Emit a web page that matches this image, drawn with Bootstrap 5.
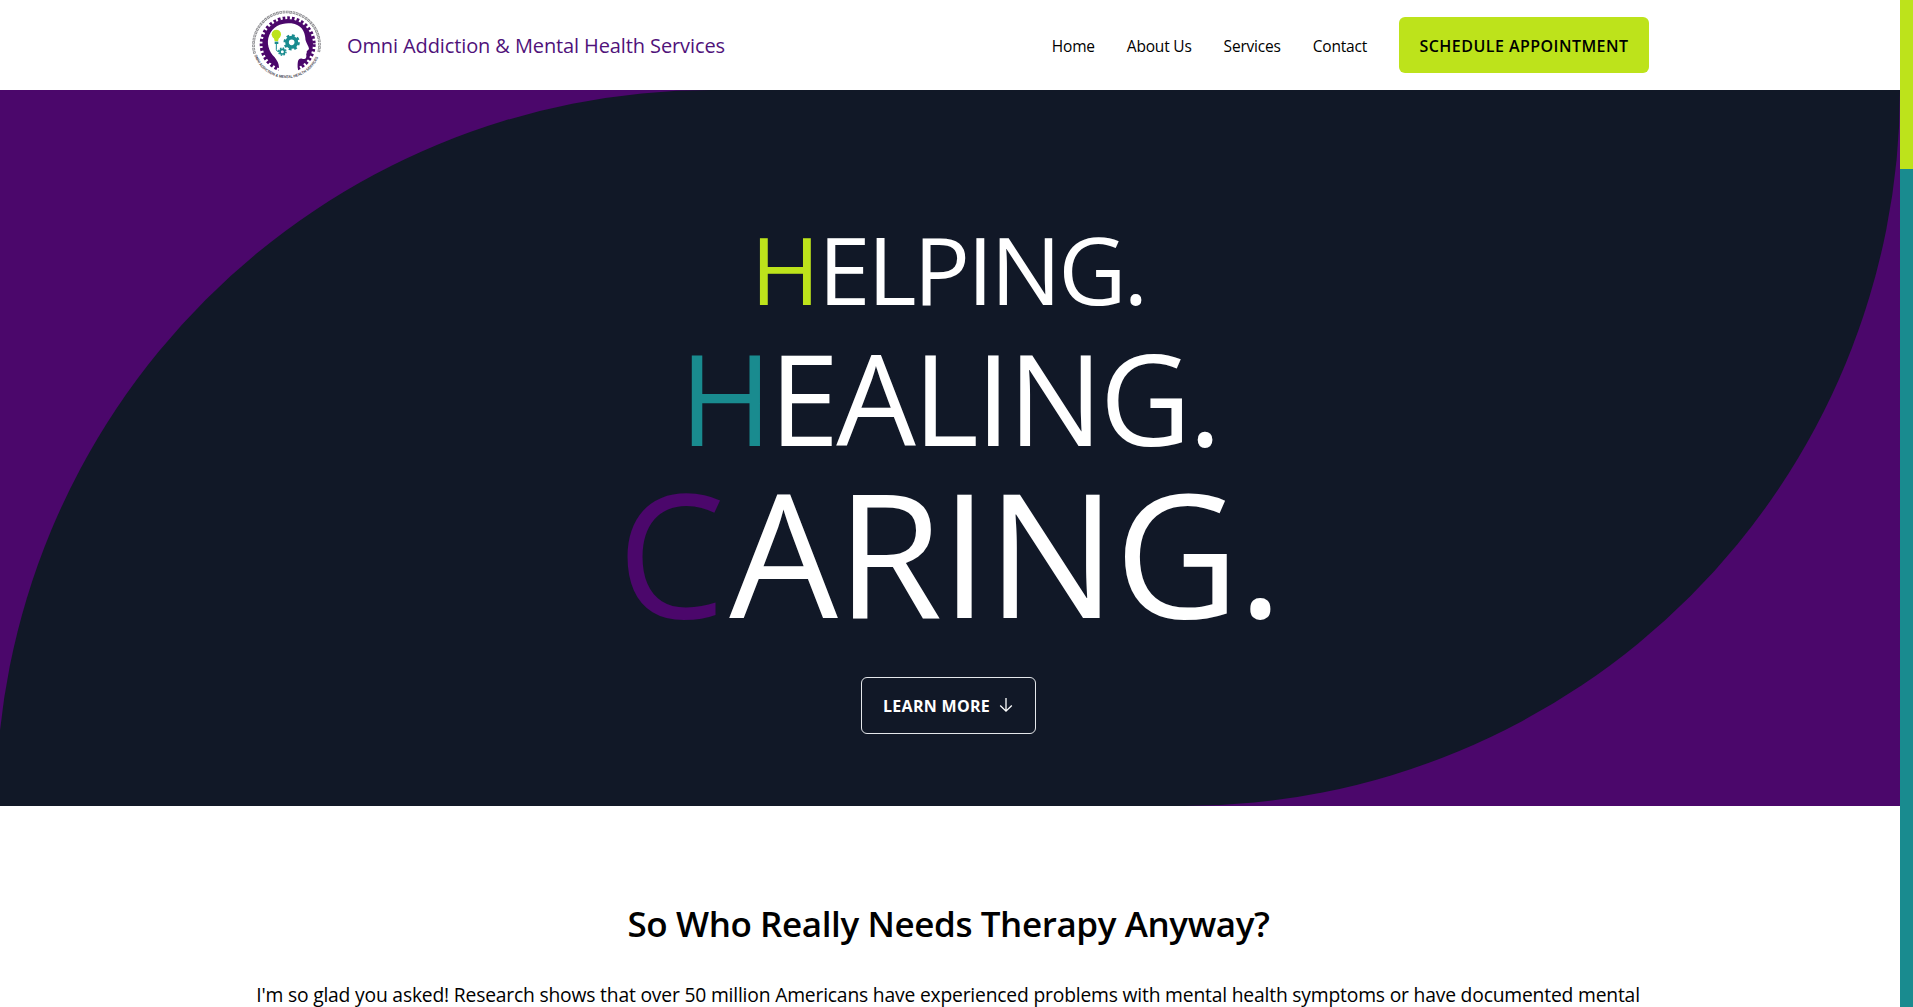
<!DOCTYPE html>
<html lang="en">
<head>
<meta charset="utf-8">
<meta name="viewport" content="width=device-width, initial-scale=1">
<title>Omni Addiction &amp; Mental Health Services</title>
<link href="https://cdn.jsdelivr.net/npm/bootstrap@5.3.0/dist/css/bootstrap.min.css" rel="stylesheet">
<style>
:root{--lime:#bde31b;--teal:#198b8f;--plum:#4b076b;--ink:#111827}
body{font-family:"Open Sans","Noto Sans",sans-serif;color:#000;height:100vh;overflow:hidden}
.page{width:1900px;height:100vh;overflow:hidden}
.wrap{width:1400px;margin:0 auto}
.site-nav{height:90px;padding:0;background:#fff}
.logo{width:70px;height:72px;margin:-2px 0 0 2px}
.brand-name{font-size:20px;font-weight:500;letter-spacing:-.11px;color:#50127a;margin-left:25px;padding-top:2px;line-height:30px}
.site-nav .links .nav-link{font-size:15.5px;letter-spacing:-.2px;color:#000;padding:1px 0 0;line-height:24px}
.links{gap:32px;margin-right:1px}
.btn-book{width:250px;height:56px;background:var(--lime);border:0;border-radius:6px;font-size:16px;font-weight:600;letter-spacing:.46px;padding:1px 0 0;color:#000}
.hero{height:716px;background:var(--plum);overflow:hidden}
.leaf{height:716px;background:var(--ink);border-radius:716px 0 716px 0;margin-left:-4px;padding:130.5px 0 0 4px}
.word{color:#fff;font-weight:400;margin:0;white-space:nowrap}
.w1{font-size:94px;line-height:96px;letter-spacing:-3px;padding-right:4px}
.w1 span{letter-spacing:-1.8px}
.w2{font-size:126px;line-height:128px;letter-spacing:-3px;margin-top:16.5px;padding-right:2px}
.w3{font-size:172px;line-height:176px;letter-spacing:-1.8px;margin-top:2.2px;padding-right:2px}
.w3 span{letter-spacing:4px}
.c-lime{color:var(--lime)}.c-teal{color:var(--teal)}.c-plum{color:var(--plum)}
.btn-more{width:175px;height:57px;border:1px solid #e5e7eb;border-radius:6px;color:#fff;font-size:16px;font-weight:700;letter-spacing:.3px;margin:38px 3px 0 0;padding:1px 1px 0 0;gap:9px}
.about{padding-top:98px}
.about h2{font-size:35px;line-height:40px;font-weight:600;letter-spacing:-.4px;margin:0 0 35px;padding-right:3px}
.about p{font-size:19.3px;line-height:32px;letter-spacing:-.19px;margin:0 -10px;padding-right:4px;white-space:nowrap}
.scroll-rail{width:13px;height:100vh;background:var(--teal)}
.scroll-thumb{height:169px;background:var(--lime)}
</style>
<script src="https://cdn.jsdelivr.net/npm/bootstrap@5.3.0/dist/js/bootstrap.bundle.min.js"></script>
</head>
<body class="d-flex">
<div class="page flex-shrink-0">
  <nav class="site-nav navbar navbar-expand">
    <div class="wrap d-flex align-items-center">
      <svg class="logo flex-shrink-0" viewBox="36 24 210 216" role="img" aria-label="Omni logo">
        <defs><path id="seal" d="M43 166A103 103 0 0 0 237 166"/></defs>
        <path d="M44 161A99 99 0 1 1 236 157" fill="none" stroke="#8b8b8f" stroke-width="8" stroke-dasharray="8 2"/>
        <path d="M44 161A99 99 0 1 1 236 157" fill="none" stroke="#fff" stroke-width="3" stroke-dasharray="4 6" stroke-dashoffset="-2"/>
        <circle cx="143" cy="133" r="76" fill="#4b076b"/>
        <circle cx="143" cy="133" r="79" fill="none" stroke="#4b076b" stroke-width="10" stroke-dasharray="8 6.18"/>
        <path d="M116 222C119 196 116 188 104 172C86 154 78 128 88 105C99 77 128 67 154 70C184 74 194 94 196 114C195 124 207 140 207 146C207 150 200 151 200 155C202 159 197 161 199 165C200 178 194 178 186 176C174 174 170 184 175 222Z" fill="#fff"/>
        <circle cx="109" cy="103" r="14" fill="#bde31b"/><path d="M101 112h16l-3 12h-10z" fill="#bde31b"/>
        <path d="M104 125h11v7h-11z" fill="#198b8f"/>
        <path d="M109 132v17q0 6 9 6" fill="none" stroke="#198b8f" stroke-width="3"/>
        <circle cx="155" cy="127" r="14" fill="none" stroke="#198b8f" stroke-width="11"/>
        <circle cx="155" cy="127" r="21" fill="none" stroke="#198b8f" stroke-width="7" stroke-dasharray="8.5 8"/>
        <circle cx="127" cy="155" r="7" fill="none" stroke="#198b8f" stroke-width="5"/>
        <circle cx="127" cy="155" r="11" fill="none" stroke="#198b8f" stroke-width="4" stroke-dasharray="4.6 4.04"/>
        <text font-family="Liberation Sans, sans-serif" font-size="11.5" font-weight="700" fill="#45424d"><textPath href="#seal" textLength="246" lengthAdjust="spacingAndGlyphs">OMNI ADDICTION &amp; MENTAL HEALTH SERVICES</textPath></text>
      </svg>
      <span class="brand-name">Omni Addiction &amp; Mental Health Services</span>
      <div class="links navbar-nav ms-auto align-items-center">
        <a class="nav-link" href="#">Home</a>
        <a class="nav-link" href="#">About Us</a>
        <a class="nav-link" href="#">Services</a>
        <a class="nav-link" href="#">Contact</a>
        <a class="btn btn-book d-flex align-items-center justify-content-center" href="#">SCHEDULE APPOINTMENT</a>
      </div>
    </div>
  </nav>
  <header class="hero">
    <div class="leaf d-flex flex-column align-items-center">
      <h1 class="word w1"><span class="c-lime">H</span>ELPING.</h1>
      <h1 class="word w2"><span class="c-teal">H</span>EALING.</h1>
      <h1 class="word w3"><span class="c-plum">C</span>ARING.</h1>
      <a class="btn btn-more d-flex align-items-center justify-content-center" href="#">LEARN MORE
        <svg width="14" height="16" viewBox="0 0 14 16" fill="none" stroke="#fff" stroke-width="1.3"><path d="M7 0v13M1.2 7.5L7 13.2l5.8-5.7"/></svg>
      </a>
    </div>
  </header>
  <section class="about">
    <div class="wrap text-center">
      <h2>So Who Really Needs Therapy Anyway?</h2>
      <p>I'm so glad you asked! Research shows that over 50 million Americans have experienced problems with mental health symptoms or have documented mental</p>
    </div>
  </section>
</div>
<div class="scroll-rail flex-shrink-0"><div class="scroll-thumb"></div></div>
</body>
</html>
